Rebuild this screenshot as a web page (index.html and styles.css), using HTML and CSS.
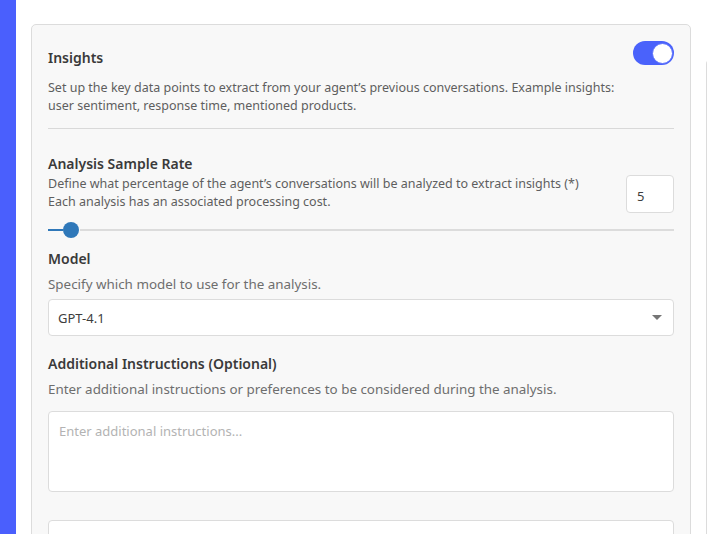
FILE: index.html
```html
<!DOCTYPE html>
<html>
<head>
<meta charset="utf-8">
<link rel="stylesheet" href="styles.css">
</head>
<body>
<div class="page">
  <aside class="rail"></aside>
  <main class="main">
    <section class="card">
      <div class="head">
        <h2 class="title">Insights</h2>
        <span class="toggle"><span class="knob"></span></span>
      </div>
      <p class="desc intro">Set up the key data points to extract from your agent’s previous conversations. Example insights: user sentiment, response time, mentioned products.</p>
      <hr class="divider">
      <div class="rate">
        <div class="rate-text">
          <h3 class="label">Analysis Sample Rate</h3>
          <p class="desc tight">Define what percentage of the agent’s conversations will be analyzed to extract insights (*)<br>Each analysis has an associated processing cost.</p>
        </div>
        <div class="num">5</div>
      </div>
      <div class="slider"><span class="fill"></span><span class="thumb"></span><span class="track"></span></div>
      <h3 class="label">Model</h3>
      <p class="desc hint">Specify which model to use for the analysis.</p>
      <div class="select"><span>GPT-4.1</span><span class="caret"></span></div>
      <h3 class="label sect">Additional Instructions (Optional)</h3>
      <p class="desc hint">Enter additional instructions or preferences to be considered during the analysis.</p>
      <div class="textarea">Enter additional instructions...</div>
      <div class="box"></div>
    </section>
    <div class="side"></div>
  </main>
</div>
</body>
</html>
```

FILE: styles.css
```css
* { box-sizing: border-box; }
html, body { margin: 0; padding: 0; background: #fff; }
body { font-family: "Noto Sans", sans-serif; color: #3d3d3d; overflow: hidden; }
.page { display: flex; height: 534px; width: 707px; overflow: hidden; }
.rail { width: 16px; background: #4a5ffd; flex: none; }
.main { flex: 1; display: flex; padding: 24px 0 0 15px; }
.card { width: 660px; flex: none; background: #f8f8f8; border: 1px solid #dcdcdc; border-radius: 5px; padding: 16px 16px 0 16px; height: 560px; }
.side { margin-left: 15px; margin-top: 36px; width: 20px; border-left: 1px solid #dcdcdc; border-top: 1px solid #dcdcdc; border-top-left-radius: 4px; height: 600px; }
.head { display: flex; justify-content: space-between; align-items: flex-start; height: 26px; }
.title { margin: 8px 0 0 0; font-size: 14px; line-height: 18px; font-weight: 600; color: #3a3a3a; }
.toggle { width: 41px; height: 24px; border-radius: 12px; background: #4a62fb; display: flex; align-items: center; justify-content: flex-end; padding-right: 1px; }
.knob { width: 21px; height: 21px; border-radius: 50%; background: #fff; border: 1px solid #5a70fb; }
.desc { margin: 0; font-size: 12.5px; line-height: 18px; color: #5e5e5e; }
.intro { margin-top: 12px; max-width: 580px; }
.divider { border: 0; border-top: 1px solid #d9d9d9; margin: 13px 0 0 0; }
.rate { display: flex; justify-content: space-between; align-items: flex-end; margin-top: 26px; }
.label { margin: 0; font-size: 14px; font-weight: 600; color: #3a3a3a; line-height: 18px; }
.tight { margin-top: 2px; }
.num { width: 48px; height: 38px; border: 1px solid #dcdcdc; border-radius: 4px; background: #fff; font-size: 13px; padding: 11px 0 0 10px; color: #3d3d3d; margin-bottom: -2px; }
.slider { height: 16px; margin-top: 11px; margin-bottom: 12px; display: flex; align-items: center; }
.fill { width: 15px; height: 2px; background: #2f78b9; }
.thumb { width: 16px; height: 16px; border-radius: 50%; background: #2f78b9; }
.track { flex: 1; height: 2px; background: #dcdcdc; margin-left: 1px; }
.hint { margin-top: 7px; font-size: 13.4px; color: #6e6e6e; }
.select { margin-top: 6px; height: 37px; background: #fff; border: 1px solid #dcdcdc; border-radius: 4px; display: flex; align-items: center; justify-content: space-between; padding: 0 11px 0 9px; font-size: 13px; color: #3d3d3d; }
.caret { width: 0; height: 0; border-left: 5px solid transparent; border-right: 5px solid transparent; border-top: 5px solid #757575; }
.sect { margin-top: 19px; }
.textarea { margin-top: 13px; height: 81px; background: #fff; border: 1px solid #dcdcdc; border-radius: 4px; padding: 10px 10px; font-size: 13px; color: #b3b3b3; }
.box { margin-top: 28px; height: 40px; background: #fff; border: 1px solid #dcdcdc; border-radius: 4px; }
```
